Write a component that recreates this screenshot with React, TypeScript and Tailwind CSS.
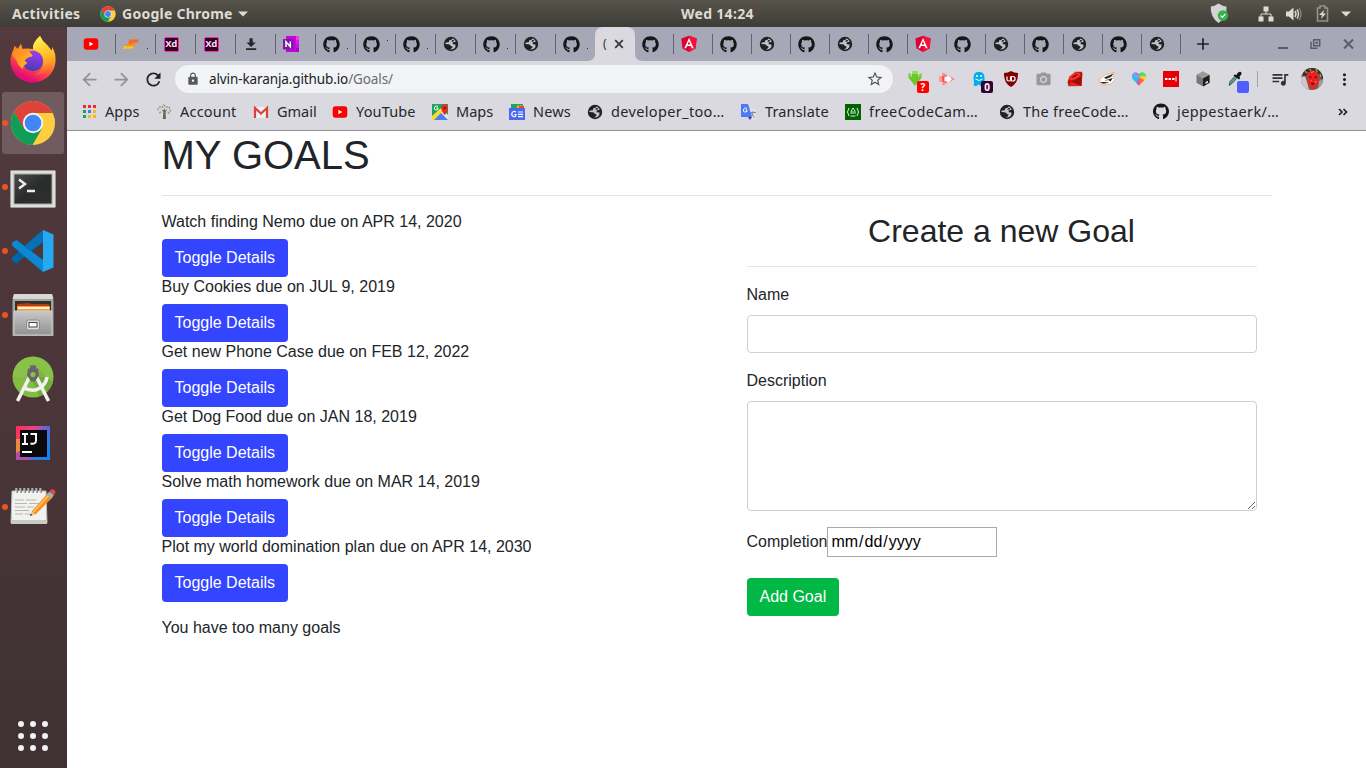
import React from "react";
import { FaGithub } from "react-icons/fa";
import { MdArrowBack, MdArrowForward, MdRefresh, MdLock, MdStarBorder, MdQueueMusic, MdMoreVert, MdAdd, MdCameraAlt } from "react-icons/md";

const Globe = () => (
  <svg width="16" height="16" viewBox="0 0 16 16">
    <circle cx="8" cy="8" r="7.200" fill="#202124" />
    <path d="M9.800 2.600Q8.600 2.700 8.400 4L6.200 4.300 5.800 6.200 3.200 6.600Q2.300 6.900 2.300 8L5.500 8.200Q7.600 8.300 7.800 10L9.300 10.200 9.300 12 6.800 13.400Q10.500 14 12.300 11.300L12.500 8.600 9.800 8.200 9.600 6.600 12.900 5.600Q12 3.500 9.800 2.600z" fill="#c3c3cd" />
    <path d="M9.600 3.700l1.900.8-1.700 1.300-1.600-.2z" fill="#202124" />
  </svg>
);
const Git = () => <FaGithub className="h-[17px] w-[17px] text-[#161616]" />;

const YouTube = () => (
  <svg width="16" height="16" viewBox="0 0 16 16">
    <rect x="0.7" y="2.3" width="14.6" height="11.4" rx="3" fill="#f00" />
    <path d="M6.400 5.700v4.600L10.400 8z" fill="#fff" />
  </svg>
);

const Xd = () => (
  <span className="flex h-[15px] w-[15px] items-center justify-center rounded-[2px] border border-[#ff26be] bg-[#2e001f] font-['Noto_Sans'] text-[9.5px] leading-none font-bold tracking-[-0.4px] text-[#ffd9f2]">
    Xd
  </span>
);

const OneNote = () => (
  <svg width="17" height="16" viewBox="0 0 17 16">
    <path d="M3 0h13v16H3z" fill="#cf00e0" />
    <path d="M13 0h3v4h-3z" fill="#e53cf0" />
    <path d="M13 4h3v4h-3z" fill="#d51fea" />
    <path d="M13 8h3v4h-3z" fill="#b81fd0" />
    <path d="M13 12h3v4h-3z" fill="#9a10c0" />
    <rect x="0" y="3" width="10.5" height="10.5" rx="0.8" fill="#7a1aa0" />
    <path d="M3 11V5.800l4.300 4.900V5.500" stroke="#fff" strokeWidth="1.500" fill="none" />
  </svg>
);

const Speed = () => (
  <svg width="16" height="16" viewBox="0 0 16 16">
    <path d="M6.500 3.500h9.200l-.8 3.200H9.500L9 8H5.300z" fill="#ff6a13" />
    <path d="M2.500 8h2.200l-.4 1.500H2zM5 8h7.500l-.8 2H4.600z" fill="#ff8c1a" />
    <path d="M.8 10h3.600l-.7 3H.2zM4.800 10.300h5.700l-.8 2.400H4.200z" fill="#ffc60a" />
  </svg>
);

const Angular = () => (
  <svg width="18" height="18" viewBox="0 0 18 18">
    <path d="M9 .8l7.700 2.700-1.200 10L9 17l-6.500-3.500-1.200-10z" fill="#dd0031" />
    <path d="M9 .8l7.700 2.700-1.200 10L9 17z" fill="#f3123c" />
    <path d="M9 3L4.300 13.300h1.800l.95-2.300h3.900l.95 2.300h1.800zm0 3.200l1.350 3.300h-2.700z" fill="#fff" />
  </svg>
);

const Download = () => (
  <svg width="16" height="16" viewBox="0 0 16 16">
    <path d="M6.500 2.300h3.200v4.200h3L8.100 11 3.500 6.500h3zM3 12.300h10.200V14H3z" fill="#25262a" />
  </svg>
);

const favicons: Record<string, () => React.ReactElement> = {
  y: YouTube,
  s: Speed,
  x: Xd,
  d: Download,
  n: OneNote,
  g: Git,
  w: Globe,
  a: Angular,
};

type TabSpec = { icon: string; mark?: boolean; up?: boolean };
const leftTabs: TabSpec[] = [
  { icon: "y" }, { icon: "s", mark: true }, { icon: "x" }, { icon: "x" }, { icon: "d" }, { icon: "n" },
  { icon: "g", mark: true }, { icon: "g", mark: true, up: true }, { icon: "g", mark: true }, { icon: "w" },
  { icon: "g", mark: true }, { icon: "w" }, { icon: "g", mark: true },
];
const rightTabs = ["g", "a", "g", "w", "g", "w", "g", "a", "g", "w", "g", "w", "g", "w"];

function ChromeLogo({ size }: { size: number }) {
  return (
    <svg width={size} height={size} viewBox="0 0 48 48">
      <circle cx="24" cy="24" r="23" fill="#ffcd40" />
      <path d="M4.100 12.500A23 23 0 0 1 43.900 12.500L44 13.500H24L14 30z" fill="#db4437" />
      <path d="M4.100 12.500A23 23 0 0 0 23.500 47L33.500 29.500 24 34.500 14.300 29.500z" fill="#0f9d58" />
      <circle cx="24" cy="24" r="10.600" fill="#f4f4f4" />
      <circle cx="24" cy="24" r="8.700" fill="#4285f4" />
    </svg>
  );
}

function TopBar() {
  return (
    <header className="flex h-[27px] shrink-0 items-center bg-linear-to-b from-[#57544b] to-[#3d3c37] font-['Noto_Sans',sans-serif] text-[14px] font-bold text-[#dfdbd2]">
      <span className="w-[88px] shrink-0 pl-3 tracking-[0.35px]">Activities</span>
      <span className="flex w-[34px] shrink-0 pl-3"><ChromeLogo size={16} /></span>
      <span className="w-[116px] shrink-0 tracking-[0.25px] whitespace-nowrap">Google Chrome</span>
      <svg width="10" height="6" viewBox="0 0 10 6"><path d="M0 .5h10L5 5.500z" fill="#dfdbd2" /></svg>
      <span className="ml-[433px] w-[76px] tracking-[0.3px] whitespace-nowrap">Wed 14:24</span>
      <div className="ml-auto flex items-center pr-[15px]">
        <svg className="mr-[29px]" width="19" height="21" viewBox="0 0 19 21">
          <path d="M8.500.5Q12 3 16.500 3.500 17.500 14 8.500 20 0 14 .8 3.500 5 3 8.500.5z" fill="#d3d3d3" />
          <circle cx="13" cy="12.500" r="5.200" fill="#33b04a" />
          <path d="M10.600 12.600l1.800 1.700 3-3.300" stroke="#fff" strokeWidth="1.200" fill="none" />
        </svg>
        <svg className="mr-[12px]" width="16" height="16" viewBox="0 0 16 16" fill="#dfdbd2">
          <path d="M5.500 0.500h5v5h-5zM0.500 10.500h5v5h-5zM10.500 10.500h5v5h-5z" />
          <path d="M8 5v3M3 11V8h10v3" fill="none" stroke="#dfdbd2" />
        </svg>
        <svg className="mr-[14px]" width="16" height="14" viewBox="0 0 16 14">
          <path d="M0 4.500h3L7.500.5v13L3 9.500H0z" fill="#dfdbd2" />
          <path d="M9 4q2 3 0 6M11 2.500q3 4.500 0 9" stroke="#dfdbd2" strokeWidth="1.400" fill="none" />
          <path d="M13 1q4 6 0 12" stroke="#8a877f" strokeWidth="1.300" fill="none" />
        </svg>
        <svg className="mr-[12px]" width="13" height="17" viewBox="0 0 13 17">
          <path d="M1.500 3h2.500V1h5v2h2.500v13h-10z" fill="none" stroke="#96938b" strokeWidth="1.600" />
          <path d="M8.500 4.500L3 10h3l-1 4 5-5.500H7z" fill="#dfdbd2" />
        </svg>
        <svg width="10" height="6" viewBox="0 0 10 6"><path d="M0 .5h10L5 5.500z" fill="#dfdbd2" /></svg>
      </div>
    </header>
  );
}

function Firefox() {
  return (
    <svg width="48" height="48" viewBox="0 0 48 48">
      <defs>
        <linearGradient id="ffa" x1="0.8" y1="0" x2="0.3" y2="1">
          <stop offset="0" stopColor="#fff44f" /><stop offset="0.3" stopColor="#ffb21f" />
          <stop offset="0.6" stopColor="#ff5a36" /><stop offset="0.9" stopColor="#e80b77" />
        </linearGradient>
        <linearGradient id="ffb" x1="0.6" y1="0" x2="0.4" y2="1">
          <stop offset="0" stopColor="#a53af0" /><stop offset="1" stopColor="#473bb0" />
        </linearGradient>
        <linearGradient id="ffc" x1="0" y1="0" x2="1" y2="1">
          <stop offset="0" stopColor="#ff7a1f" /><stop offset="1" stopColor="#ffc229" />
        </linearGradient>
        <linearGradient id="ffd" x1="0.3" y1="0" x2="0.6" y2="1">
          <stop offset="0" stopColor="#fff44f" /><stop offset="0.6" stopColor="#ffb825" /><stop offset="1" stopColor="#ff8a2c" stopOpacity="0" />
        </linearGradient>
      </defs>
      <path d="M31 1q2 5 7 9l5 6v-4q4 6 3.500 14C46 38 36 47.500 24 47.500S1.500 38 1.500 26q0-7 3.500-12l.5-3 3 3L12 9l1 5q5-1 11 0 0-7 7-13z" fill="url(#ffa)" />
      <path d="M31 1q-8 7-7 13 2 1 4 3 8 5 6 14-2 7-9 9 13 0 18-9 2-5 0-15l-5-6q-5-4-7-9z" fill="url(#ffd)" />
      <circle cx="24" cy="26" r="10.200" fill="url(#ffb)" />
      <path d="M3 19l2.500-8 3.500 3 3-5 1.500 5q5-1 9 5 3 2.500-2 3-4 1.500-5 4 3.500 1 2 3-3 1-4 5-5-4-6-9-3-2-4.500-6z" fill="url(#ffc)" />
    </svg>
  );
}

const dock: { icon: React.ReactElement; running?: boolean; active?: boolean }[] = [
  { icon: <Firefox /> },
  { icon: <ChromeLogo size={46} />, running: true, active: true },
  {
    running: true,
    icon: (
      <svg className="mt-[3px]" width="46" height="38" viewBox="0 0 46 38">
        <defs><linearGradient id="tm" x1="0" y1="0" x2="1" y2="1"><stop offset="0" stopColor="#4a4a4a" /><stop offset=".5" stopColor="#2a2c2b" /><stop offset="1" stopColor="#2f3130" /></linearGradient></defs>
        <rect x=".5" y=".5" width="45" height="37" rx="1" fill="#dededb" stroke="#9b9b98" />
        <rect x="3.500" y="3.500" width="39" height="31" fill="#a8a9a6" />
        <rect x="4.500" y="4.500" width="37" height="29" fill="url(#tm)" />
        <path d="M9 9.500l6 4.500-6 4.500M17 21h8" stroke="#eee" strokeWidth="2.400" fill="none" />
      </svg>
    ),
  },
  {
    running: true,
    icon: (
      <svg width="44" height="44" viewBox="0 0 44 44">
        <path d="M32 1v12L5.500 34.500 1 31.500v-3z" fill="#0065a9" />
        <path d="M32 43V31L5.500 11 1 13.500v3z" fill="#0a8ad4" />
        <path d="M32 1l10.500 4.500v33L32 43z" fill="#27a9f2" />
        <path d="M32 1v12L19 22l-6-4.500z" fill="#0870b5" />
      </svg>
    ),
  },
  {
    running: true,
    icon: (
      <svg width="42" height="44" viewBox="0 0 42 44">
        <defs><linearGradient id="fl" x1="0" y1="0" x2="0" y2="1"><stop offset="0" stopColor="#c8c8c8" /><stop offset="1" stopColor="#929292" /></linearGradient></defs>
        <path d="M2 1h38l1.500 7v35h-41V8z" fill="#a4a4a2" />
        <path d="M2 1h38l1.500 5h-41z" fill="#d8d8d6" />
        <path d="M3 8h36v11H3z" fill="#33302e" />
        <path d="M5 11l12-1 2 1h18v8H5z" fill="#b93a12" />
        <path d="M5 13h33v6H5z" fill="#fa9d35" />
        <path d="M6 14h31v2H6z" fill="#fff3db" />
        <path d="M2 18h38v24H2z" fill="url(#fl)" stroke="#ccc" />
        <rect x="14.500" y="27" width="13" height="10" rx="2" fill="#dcdcdc" stroke="#8a8a8a" />
        <rect x="17" y="29.500" width="8" height="4.500" fill="#fff" stroke="#444" />
      </svg>
    ),
  },
  {
    icon: (
      <svg width="44" height="48" viewBox="0 0 44 48">
        <circle cx="22" cy="22" r="20.500" fill="#83bd40" />
        <path d="M22 8l20 20q-4 11-14 13L18 18z" fill="#6da335" opacity=".7" />
        <path d="M1.500 22a20.500 20.500 0 0 1 41 0z" fill="#99ca5b" opacity=".35" />
        <path d="M19 21L6.500 46M25 21l12.500 25" stroke="#f1f1f1" strokeWidth="3.600" />
        <path d="M12 32q9 6 17 1 6-4 7-11" stroke="#f1f1f1" strokeWidth="3.600" fill="none" />
        <path d="M19 10.500h6v4h-6z" fill="#666" />
        <path d="M17 13.500h10l1 7-4 6h-4l-4-6z" fill="#666" />
        <circle cx="22" cy="19.500" r="2.600" fill="#89c148" />
      </svg>
    ),
  },
  {
    icon: (
      <svg width="34" height="34" viewBox="0 0 34 34">
        <defs><linearGradient id="ij" x1="0" y1="0.2" x2="1" y2="0.8"><stop offset="0" stopColor="#ff3060" /><stop offset=".35" stopColor="#e0468f" /><stop offset=".6" stopColor="#5d66d8" /><stop offset="1" stopColor="#0b84f5" /></linearGradient></defs>
        <path d="M0 0h34v34H0z" fill="url(#ij)" />
        <path d="M0 13h6v13l-6 1z" fill="#e98c39" />
        <path d="M0 27l6-3v6h7v4H0z" fill="#b04fa7" />
        <path d="M4 4h27v27H4z" fill="#0a0a0a" />
        <path d="M6 8h6M9 8v10M6 18h6M14.500 8h6.500M20 8v6.500q0 4-5.500 3" stroke="#fff" strokeWidth="1.900" fill="none" />
        <path d="M6 25h10v2H6z" fill="#fff" />
      </svg>
    ),
  },
  {
    running: true,
    icon: (
      <svg className="-mt-[3px]" width="46" height="38" viewBox="0 0 46 38">
        <path d="M2 4h34l1 32H1z" fill="#f1f1ee" stroke="#bbb" />
        <path d="M1 33h36v4H1z" fill="#c9cbc6" />
        <path d="M5 13h9m2 0h10m-21 3.500h12m2 0h11M5 20h10m2 0h7M5 23.500h14M5 27h8m2 0h8" stroke="#b0b0b0" strokeWidth=".9" />
        <path d="M7 1v5m4-5v5m4-5v5m4-5v5m4-5v5m4-5v5m4-5v5" stroke="#777" strokeWidth="1.600" />
        <path d="M6 1v5m4-5v5m4-5v5m4-5v5m4-5v5m4-5v5m4-5v5" stroke="#eee" strokeWidth="1" />
        <path d="M22 24L38 6l5 4-17 17-6 2z" fill="#f6921e" />
        <path d="M23.500 25L39 8" stroke="#ffc46b" strokeWidth="1.500" />
        <path d="M20 29l1.500-4.500 4 2.800z" fill="#efcf9a" />
        <path d="M20 29l.8-2.200 1.500 1.300z" fill="#222" />
        <path d="M36.500 7.500l3-3 4.500 3.500-3 3.500z" fill="#9fb0b5" />
        <path d="M39.500 4.500q1.500-3.500 5-1.500 2 2.500-.5 5z" fill="#e2483d" />
      </svg>
    ),
  },
];

function Dock() {
  return (
    <aside className="flex w-[67px] shrink-0 flex-col bg-linear-to-b from-[#523a3e] via-[#4b3539] to-[#3e3234]">
      <div className="flex flex-col gap-0.5 pt-px pl-[2px]">
        {dock.map((d, i) => (
          <div key={i} className={d.active ? "relative flex h-[62px] w-[62px] items-center justify-center rounded-[3px] bg-[#705b5e]" : "relative flex h-[62px] w-[62px] items-center justify-center"}>
            {d.icon}
            {d.running && <span className="absolute top-7 left-0 h-1.5 w-1.5 rounded-full bg-[#e95420]" />}
          </div>
        ))}
      </div>
      <div className="mt-auto mb-[17px] ml-[18px] grid w-[30px] grid-cols-3 gap-1.5">
        {Array.from({ length: 9 }, (_, i) => <span key={i} className="h-1.5 w-1.5 rounded-full bg-[#f2f2f2]" />)}
      </div>
    </aside>
  );
}

function TabStrip() {
  return (
    <div className="flex h-[34px] shrink-0 bg-[#a6a7b7] pl-2">
      {leftTabs.map((t, i) => {
        const Icon = favicons[t.icon];
        const last = i === leftTabs.length - 1;
        return (
          <div key={i} className={last ? "relative flex w-10 shrink-0 items-center" : "relative flex w-10 shrink-0 items-center after:absolute after:top-[7px] after:right-[-1px] after:h-5 after:w-px after:bg-[#62636c]"}>
            <span className="flex w-8 justify-center"><Icon /></span>
            {t.mark && <span className={t.up ? "mb-2 h-px w-px bg-[#33343a]" : "mt-2 h-px w-px bg-[#33343a]"} />}
          </div>
        );
      })}
      <div className="relative flex w-10 shrink-0 items-center rounded-t-lg bg-[#dad9e0]">
        <svg className="absolute bottom-0 -left-2" width="8" height="8"><path d="M8 0v8H0q8 0 8-8z" fill="#dad9e0" /></svg>
        <svg className="absolute -right-2 bottom-0" width="8" height="8"><path d="M0 0v8h8Q0 8 0 0z" fill="#dad9e0" /></svg>
        <span className="ml-2 w-[5px] overflow-hidden font-['Noto_Sans'] text-[12px] leading-4 text-[#303136]">(</span>
        <svg className="ml-[6px]" width="10" height="10" viewBox="0 0 10 10"><path d="M1.200 1.200l7.600 7.600M8.800 1.200L1.200 8.800" stroke="#34353a" strokeWidth="1.700" /></svg>
      </div>
      <div className="-ml-px flex">
        {rightTabs.map((t, i) => {
          const Icon = favicons[t];
          return (
            <div key={i} className="relative flex w-[39px] shrink-0 items-center after:absolute after:top-[7px] after:right-[-1px] after:h-5 after:w-px after:bg-[#62636c]">
              <span className="flex w-8 justify-center"><Icon /></span>
            </div>
          );
        })}
      </div>
      <MdAdd className="mt-[7px] ml-[13px] h-5 w-5 text-[#202124]" />
      <div className="ml-auto flex pr-[12px] text-[#5a5b65]">
        <span className="mt-[20px] h-[2px] w-[10px] bg-[#5a5b65]" />
        <svg className="mt-3 ml-[22px]" width="11" height="10" viewBox="0 0 11 10" fill="none" stroke="currentColor" strokeWidth="1.500"><path d="M3.700.8h6v5.900h-6zM1 2.800v6.400h6.500" /><path d="M6 3h1.500v1.500H6z" strokeWidth="1" /></svg>
        <svg className="mt-3 ml-[22px]" width="11" height="10" viewBox="0 0 11 10" fill="none" stroke="currentColor" strokeWidth="1.900"><path d="M1 .5l9 9M10 .5l-9 9" /></svg>
      </div>
    </div>
  );
}

const extensions: React.ReactElement[] = [
  <><svg width="16" height="16" viewBox="0 0 16 16"><path d="M5 .5h6v5h1.500l2.500.5-7 9-7-9 2.500-.5H5z" fill="#6cc72b" /><path d="M5 .5h6v2.500H5z" fill="#8fe052" /><path d="M1 2.500h2.500l1 3-3 1zM15 2.500h-2.500l-1 3 3 1z" fill="#7ed23a" /></svg><span className="absolute top-[18px] left-[18px] flex h-3 w-3 items-center justify-center rounded-[2px] bg-[#f00] text-[10px] leading-none font-bold text-white">?</span></>,
  <svg width="16" height="16" viewBox="0 0 16 16"><path d="M3.500 1.500L16 8 3.500 14.500z" fill="#ff8085" /><path d="M0 5h7v6H0z" fill="#ff5358" /><path d="M0 5h3v6H0z" fill="#ff9a9d" /><path d="M5.500 5.800h3V3.800L13 8l-4.500 4.200v-2h-3z" fill="#fff" /></svg>,
  <><svg width="16" height="16" viewBox="0 0 16 16"><path d="M2.500 7Q2.500.8 8 .8T13.500 7v7l-2-.8-2 2-2-2-2.500 2-2.500-1q1-2 0-7z" fill="#00aef0" /><circle cx="6" cy="5" r="1" fill="#fff" /><circle cx="10" cy="5" r="1" fill="#fff" /><path d="M4.500 8q3.500 3 7 0" stroke="#fff" fill="none" /></svg><span className="absolute top-[18px] left-[18px] flex h-3 w-3 items-center justify-center rounded-[2px] bg-[#330033] text-[10px] leading-none font-bold text-white">0</span></>,
  <svg width="16" height="16" viewBox="0 0 16 16"><path d="M8 0q3 2 7 2 .5 10-7 14Q.5 12 1 2q4 0 7-2z" fill="#800000" /><path d="M4 5.500v3q0 1.500 1.700 1.500T7.500 8.500v-3" stroke="#fff" fill="none" strokeWidth="1.200" /><path d="M8.300 5.500h1.500q2.300 0 2.300 2.200T9.800 10H8.300z" stroke="#fff" strokeWidth="1.200" fill="none" /></svg>,
  <MdCameraAlt className="h-[17px] w-[17px] text-[#999]" />,
  <svg width="16" height="16" viewBox="0 0 16 16"><path d="M.5 11L2.500 5.500 8.500.8h6.300l.7 2L14.500 15l-13 .3z" fill="#c3140c" /><path d="M2 8q2-5 7-6.500 5-.5 4 2.500T7 8.500Q3 10 2 8z" fill="#ee3a30" /><path d="M4 7q3-4 7-4-1 3-7 4z" fill="#a30b07" /><path d="M4 11.500l10-6 .5 9z" fill="#9b0f08" /><path d="M1.500 15l3-4 10 3.800z" fill="#e5281f" /></svg>,
  <svg width="17" height="16" viewBox="0 0 17 16"><path d="M1 8l5-4 9.500-2.500-1.500 4 2 3-4 4.500-8 1L1 12z" fill="#fff" stroke="#f6a04c" strokeWidth=".7" /><path d="M5 6.500L14.500 2.500 12 6 7 8zM8.500 8.500L14 7l-2.500 3.500zM1 11h5l4.500.8L4 12.800z" fill="#2b2b2b" /><path d="M6 9.500l4-1" stroke="#777" strokeWidth=".8" /></svg>,
  <svg width="16" height="16" viewBox="0 0 16 16">
    <defs><clipPath id="hc"><path d="M8 14.800L2 8.500Q-.5 4.800 2 2.500 5-.2 8 3q3-3.200 6-.5 2.500 2.300 0 6z" /></clipPath></defs>
    <g clipPath="url(#hc)"><path d="M0 0h8v6z" fill="#a27cf5" /><path d="M0 0l8 6-8 2z" fill="#63a8e8" /><path d="M8 0h8L8 6z" fill="#38e05a" /><path d="M16 0v5L8 6z" fill="#5fdc39" /><path d="M16 5v6L8 6z" fill="#ffcf2b" /><path d="M16 11l-8 5V6z" fill="#ff6a3c" /><path d="M0 7l8-1v10z" fill="#1ec6f0" /><path d="M4 16L8 6v10z" fill="#d04fe0" /></g>
  </svg>,
  <svg width="16" height="16" viewBox="0 0 16 16"><path d="M0 0h16v16H0z" fill="#e60005" /><path d="M2 7h2.500v2H2zM5.500 7H8v2H5.500zM9 7h2.500v2H9zM12.500 5.500h1v5h-1z" fill="#fff" /></svg>,
  <svg width="16" height="16" viewBox="0 0 16 16"><path d="M8 .5l6.500 3.500v7.800L8 15.500l-6.500-3.700V4z" fill="#777" /><path d="M8 .5L14.500 4 8 7.500 1.500 4z" fill="#9c9c9c" /><path d="M8 7.500L14.500 4v7.800L8 15.500z" fill="#1d1d1d" /><path d="M10.500 11l2.500-1.300v2L10.500 13z" fill="#ddd" /></svg>,
  <><svg width="16" height="16" viewBox="0 0 16 16"><path d="M2 14.500l1-4 5.500-6 2 2-5.500 6z" fill="#5b9f85" stroke="#333" strokeWidth=".7" /><path d="M7.500 3.500l2 .5q1.500-4 4.500-3 1.500 2-1.500 4.500l.5 2-1 1-5.500-4z" fill="#151515" /></svg><span className="absolute top-[18px] left-[18px] h-3 w-3 rounded-[2px] bg-[#505eff]" /></>,
];

function Toolbar() {
  return (
    <div className="flex h-9 shrink-0 items-center bg-[#dad9e0] pl-[6px]">
      <span className="flex w-8 shrink-0 justify-center"><MdArrowBack className="h-[21px] w-[21px] text-[#919196]" /></span>
      <span className="flex w-8 shrink-0 justify-center"><MdArrowForward className="h-[21px] w-[21px] text-[#919196]" /></span>
      <span className="flex w-8 shrink-0 justify-center"><MdRefresh className="h-[21px] w-[21px] text-[#202124]" /></span>
      <div className="ml-[6px] flex h-7 w-[718px] shrink-0 items-center rounded-full bg-[#f1f3f5]">
        <MdLock className="ml-[11px] h-3.5 w-3.5 text-[#55585c]" />
        <span className="ml-[9px] font-['Noto_Sans',sans-serif] text-[13.500px] tracking-[-0.110px] whitespace-nowrap text-[#202124]">alvin-karanja.github.io<span className="text-[#6a6d71]">/Goals/</span></span>
        <MdStarBorder className="mr-[9px] ml-auto h-[18px] w-[18px] text-[#55585c]" />
      </div>
      <div className="ml-[6px] flex">
        {extensions.map((e, i) => (
          <span key={i} className="relative flex h-8 w-8 shrink-0 items-center justify-center font-['Noto_Sans',sans-serif]">{e}</span>
        ))}
      </div>
      <span className="ml-[6px] h-4 w-px bg-[#a3a3aa]" />
      <span className="ml-[6px] flex w-8 justify-center"><MdQueueMusic className="h-5 w-5 text-[#303136]" /></span>
      <span className="flex w-8 justify-center">
        <svg width="22" height="22" viewBox="0 0 22 22">
          <defs><clipPath id="av"><circle cx="11" cy="11" r="11" /></clipPath></defs>
          <g clipPath="url(#av)">
            <path d="M0 0h22v22H0z" fill="#6b6458" />
            <path d="M2 5l4-5h12l4 7v6l-3-5-3-4H7l-2 4-3 3z" fill="#3c2d25" />
            <path d="M4 3l2 2M9 1l1 2M15 1l1 3M19 6l1 3" stroke="#9d9a4e" strokeWidth="1.500" />
            <path d="M0 9l4-1 2 6 2 8H0z" fill="#cfc6cc" />
            <path d="M18 13l4-2v9l-5 2z" fill="#a89b8e" />
            <path d="M6.500 5.500Q11 0 16 4.500l2 6-1 5-3 5-3 1-3-4-2-5z" fill="#ea2222" />
            <path d="M8 8l3 1-2 1.500zM13 9l3-1-1 2.500zM9.500 15.500l2.500-1 2 1-2 1.500z" fill="#5c1212" />
            <path d="M10 4.500l3-1M10 12l1 1M15 13l-1 2" stroke="#ff7a5c" />
          </g>
        </svg>
      </span>
      <span className="flex w-8 justify-center"><MdMoreVert className="h-[19px] w-[19px] text-[#202124]" /></span>
    </div>
  );
}

const appDots = [
  "bg-[#ea2939]", "bg-[#ea2939]", "bg-[#ea2939]",
  "bg-[#13a45b]", "bg-[#3b7cf4]", "bg-[#fbb710]",
  "bg-[#13a45b]", "bg-[#fbb710]", "bg-[#fbb710]",
];

const Apps = () => (
  <span className="grid grid-cols-3 gap-[2px]">
    {appDots.map((c, i) => <span key={i} className={`h-[3px] w-[3px] ${c}`} />)}
  </span>
);

const bookmarks: { label: string; icon: React.ReactElement; box: string; text: string }[] = [
  { label: "Apps", box: "w-[75px]", text: "tracking-[0.1px]", icon: <Apps /> },
  { label: "Account", box: "w-[97px]", text: "tracking-[0.2px]", icon: <svg width="16" height="16" viewBox="0 0 16 16"><path d="M7.300 8l-2-3 2 1.500L8.500 4l.5 2.500L11.500 5 9.500 8l.5 7H6.800z" fill="#6c6658" /><path d="M1.500 6l2-3 2.500.5 2-2.500 2 2 3 0 1.500 4-2 2-2-1M5 8L3 9" fill="none" stroke="#91a17d" strokeWidth="1.500" strokeDasharray="2 1" /></svg> },
  { label: "Gmail", box: "w-[79px]", text: "", icon: <svg width="16" height="16" viewBox="0 0 16 16"><path d="M1 3h14v11H1z" fill="#f0eff1" /><path d="M2 14V4l6 5.500L14 4v10" fill="none" stroke="#dd4037" strokeWidth="2.200" /></svg> },
  { label: "YouTube", box: "w-[100px]", text: "tracking-[0.15px]", icon: <YouTube /> },
  { label: "Maps", box: "w-[77px]", text: "", icon: <svg width="16" height="16" viewBox="0 0 16 16"><path d="M0 0h16v16H0z" fill="#1ea362" /><path d="M2 16l7-7 7 7z" fill="#4a7cff" /><path d="M8 8l3-3 5 6v5z" fill="#e6e6e6" /><path d="M0 12l9-8 2 3-9 9H0z" fill="#ffda2c" /><path d="M12.500 11q-4-5-3-8t3.500-3 3 4-3.500 7z" fill="#e52d27" /><circle cx="12.700" cy="4" r="1.200" fill="#7d1713" /><path d="M6 2.500Q3 1 2.500 4T6 5.500V4H4.500" stroke="#fff" fill="none" /></svg> },
  { label: "News", box: "w-[78px]", text: "tracking-[0.15px]", icon: <svg width="16" height="16" viewBox="0 0 16 16"><path d="M2 0h12v4H2z" fill="#1fa463" /><path d="M8 1.500h7V5H8z" fill="#fbbc04" /><path d="M10 2h5v3h-5z" fill="#ea4335" /><path d="M0 4h16v12H0z" fill="#4b68f5" /><path d="M7 8Q4 6.500 3 9t1.500 3.500T7 10.500H5.200M9 8h5M9 10.300h5M9 12.600h5" stroke="#fff" strokeWidth="1.200" fill="none" /></svg> },
  { label: "developer_too…", box: "w-[154px]", text: "tracking-[0.35px]", icon: <Globe /> },
  { label: "Translate", box: "w-[104px]", text: "tracking-[0.15px]", icon: <svg width="16" height="16" viewBox="0 0 16 16"><path d="M6 5h9v10.500H9z" fill="#e1e3e8" /><path d="M0 0h7l4 13H0z" fill="#4e79f5" /><path d="M7 13h4l-2 3z" fill="#4631b8" /><path d="M6 4.500Q3 3 2.500 6T6 7.500V6H4.500" stroke="#fff" fill="none" /><path d="M9 8.500h6M12 7v1.500q0 3-2 4M10.500 9q1 3 3.500 4.500" stroke="#7c8f9a" fill="none" /></svg> },
  { label: "freeCodeCam…", box: "w-[154px]", text: "tracking-[0.4px]", icon: <svg width="16" height="16" viewBox="0 0 16 16"><path d="M0 0h16v16H0z" fill="#006400" /><path d="M4 4Q1 8 4 12M12 4q3 4 0 8M5.500 12h5M6 10q-.5-3 2-6 3 3 2 6M8 7v3" stroke="#dcefd9" fill="none" /></svg> },
  { label: "The freeCode…", box: "w-[154px]", text: "tracking-[0.25px]", icon: <Globe /> },
  { label: "jeppestaerk/…", box: "w-[150px]", text: "tracking-[0.4px]", icon: <Git /> },
];

function Bookmarks() {
  return (
    <div className="flex h-[34px] shrink-0 items-center border-b border-[#929198] bg-[#dad9e0] pb-1 pl-[14px] font-['Noto_Sans',sans-serif] text-[14.500px] text-[#26272b]">
      {bookmarks.map((b) => (
        <div key={b.label} className={`flex shrink-0 items-center gap-2 ${b.box}`}>
          <span className="flex w-4 shrink-0 justify-center">{b.icon}</span>
          <span className={`whitespace-nowrap ${b.text}`}>{b.label}</span>
        </div>
      ))}
      <svg className="mr-[18px] ml-auto" width="10" height="8" viewBox="0 0 10 8"><path d="M1 1l3 3-3 3M5.500 1l3 3-3 3" stroke="#202124" strokeWidth="1.700" fill="none" /></svg>
    </div>
  );
}

const goals = [
  "Watch finding Nemo due on APR 14, 2020",
  "Buy Cookies due on JUL 9, 2019",
  "Get new Phone Case due on FEB 12, 2022",
  "Get Dog Food due on JAN 18, 2019",
  "Solve math homework due on MAR 14, 2019",
  "Plot my world domination plan due on APR 14, 2030",
];

function GoalsPage() {
  return (
    <main className="flex-1 bg-white pr-[94.500px] pl-[94.500px] font-['Liberation_Sans',Arial,sans-serif] text-base text-[#212529]">
      <h1 className="h-16 text-[40px] leading-[48px]">MY GOALS</h1>
      <hr className="mb-4 border-t border-[#e5e5e5]" />
      <div className="flex">
        <section className="w-[585px] shrink-0">
          {goals.map((g) => (
            <div key={g}>
              <h6 className="mb-2 leading-[19px]">{g}</h6>
              <button className="block h-[38px] rounded-[4px] bg-[#3445ff] px-[13px] leading-6 text-white">Toggle Details</button>
            </div>
          ))}
          <h6 className="mt-4 leading-[19px]">You have too many goals</h6>
        </section>
        <form className="w-[510px]">
          <h2 className="text-center text-[32px] leading-[38.400px]">Create a new Goal</h2>
          <hr className="my-4 border-t border-[#e5e5e5]" />
          <label className="mb-2 block leading-6">Name</label>
          <input className="mb-4 block h-[38px] w-full rounded-[4px] border border-[#ced0dc] px-3" />
          <label className="mb-2 block leading-6">Description</label>
          <textarea className="mb-4 block h-[110px] w-full rounded-[4px] border border-[#ced0dc] px-3" />
          <div className="flex items-center">
            <label>Completion</label>
            <div className="flex h-[30px] w-[170px] items-center border border-[#a9a9a9] pl-[2px] text-black">
              <span className="px-px">mm</span>/<span className="px-px">dd</span>/<span className="px-px">yyyy</span>
            </div>
          </div>
          <button type="button" className="mt-[21px] block h-[38px] rounded-[4px] bg-[#00b843] px-[13px] leading-6 text-white">Add Goal</button>
        </form>
      </div>
    </main>
  );
}

export default function App() {
  return (
    <div className="flex h-[768px] w-[1366px] flex-col overflow-hidden">
      <TopBar />
      <div className="flex min-h-0 flex-1">
        <Dock />
        <div className="flex min-w-0 flex-1 flex-col">
          <TabStrip />
          <Toolbar />
          <Bookmarks />
          <GoalsPage />
        </div>
      </div>
    </div>
  );
}
